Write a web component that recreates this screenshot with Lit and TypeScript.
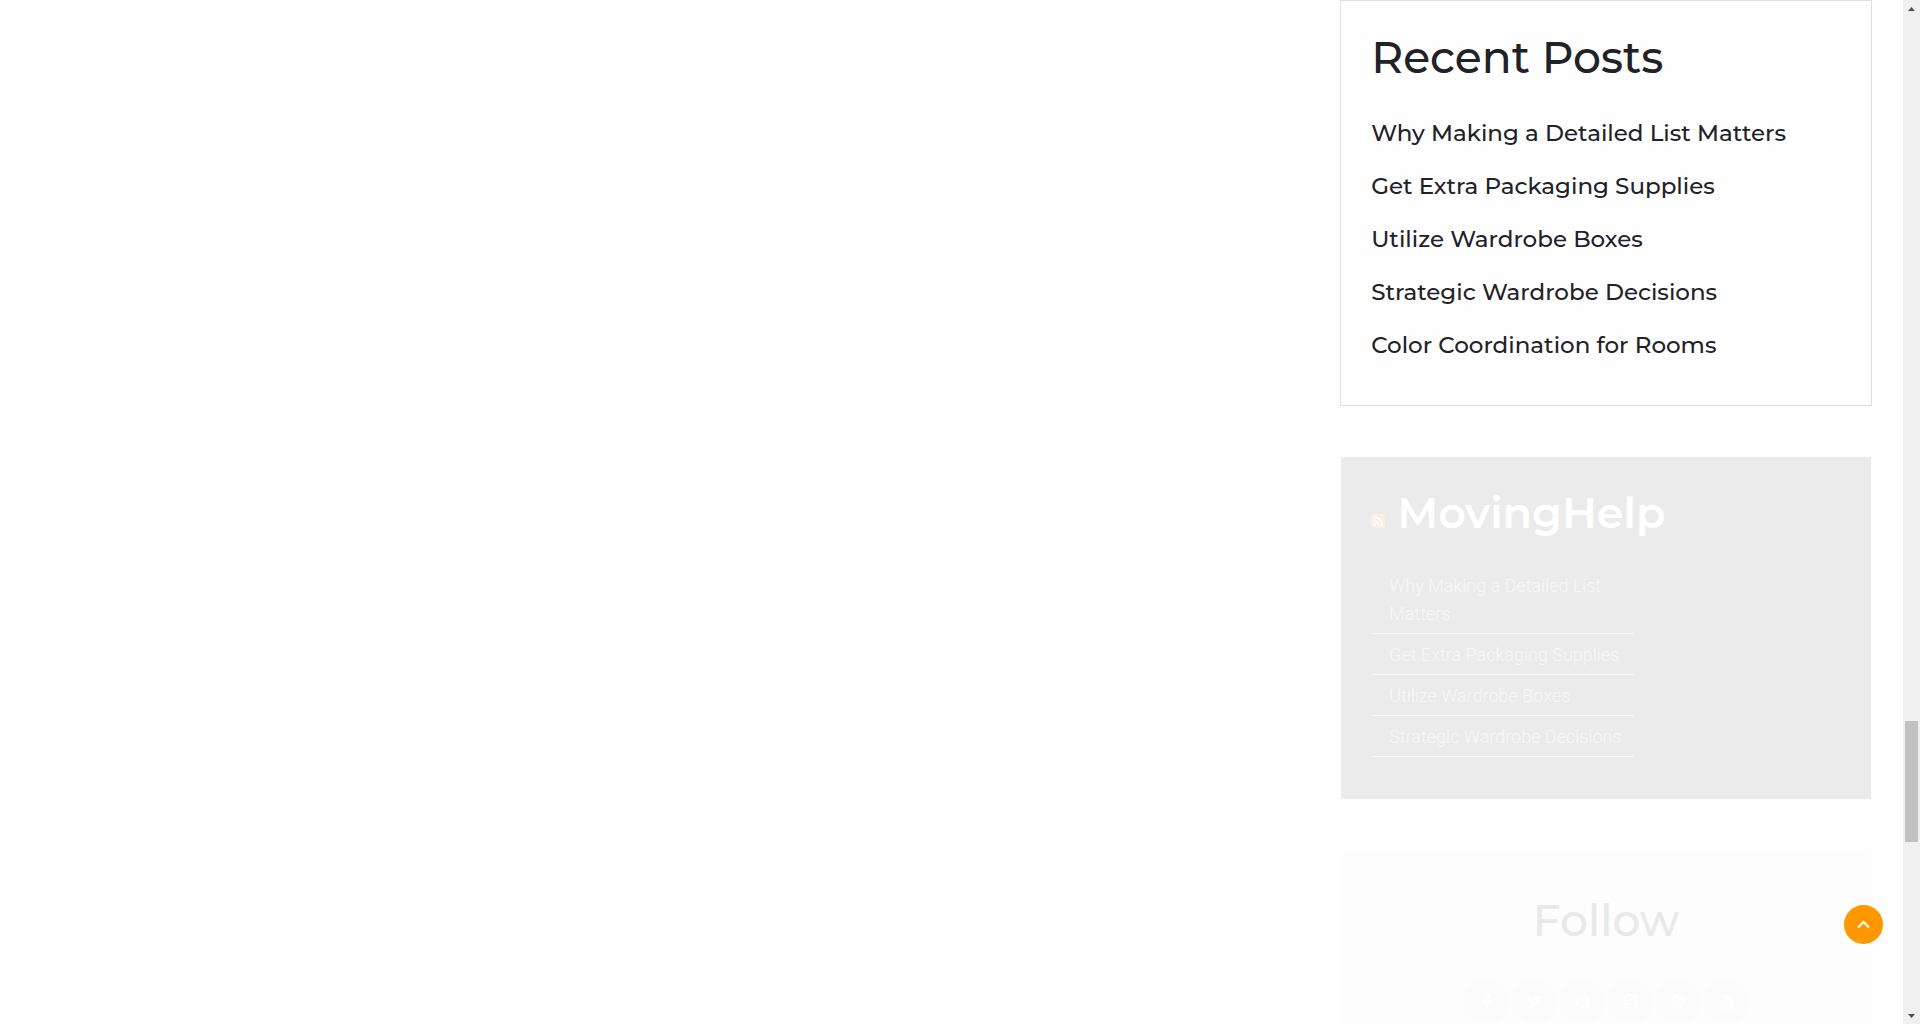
import { LitElement, html, svg, css } from "lit";
import { customElement } from "lit/decorators.js";

const posts = [
  "Why Making a Detailed List Matters",
  "Get Extra Packaging Supplies",
  "Utilize Wardrobe Boxes",
  "Strategic Wardrobe Decisions",
  "Color Coordination for Rooms",
];

const networks = [
  {
    name: "Facebook",
    icon: svg`<path d="M9.2 16V9h2.4l.4-2.9H9.2V4.4c0-.9.3-1.4 1.4-1.4H12V.2C11.700.1 10.900 0 10 0 7.800 0 6.300 1.300 6.300 3.800v2.300H4V9h2.300v7z"/>`,
  },
  {
    name: "Twitter",
    icon: svg`<path d="M16 3.100a6.500 6.500 0 0 1-1.900.5 3.300 3.300 0 0 0 1.400-1.800 6.500 6.500 0 0 1-2.100.8 3.300 3.300 0 0 0-5.600 3A9.300 9.300 0 0 1 1.100 2.200a3.300 3.300 0 0 0 1 4.400 3.300 3.300 0 0 1-1.500-.4 3.300 3.300 0 0 0 2.600 3.300 3.300 3.300 0 0 1-1.500 0 3.300 3.300 0 0 0 3.100 2.300A6.600 6.600 0 0 1 0 13.100 9.300 9.300 0 0 0 14.400 4.800 6.700 6.700 0 0 0 16 3.100z"/>`,
  },
  {
    name: "Pinterest",
    icon: svg`<path d="M8 1a7 7 0 0 0-2.700 13.500c0-.6 0-1.300.1-1.900l.9-3.800s-.2-.5-.2-1.100c0-1 .6-1.800 1.300-1.800.6 0 .9.500.9 1 0 .6-.4 1.500-.6 2.400-.2.700.4 1.300 1.100 1.300 1.300 0 2.200-1.700 2.200-3.700 0-1.500-1-2.700-2.900-2.700a3.300 3.300 0 0 0-3.400 3.300c0 .6.200 1 .5 1.300.1.200.1.300.1.400l-.2.600c0 .2-.2.300-.4.200-1-.4-1.400-1.500-1.400-2.700C3.300 5.200 5 3 8.300 3c2.600 0 4.400 1.900 4.400 4 0 2.700-1.500 4.800-3.700 4.800-.8 0-1.500-.4-1.700-.9l-.5 1.900c-.2.600-.5 1.200-.8 1.700A7 7 0 1 0 8 1z"/>`,
  },
  {
    name: "Instagram",
    icon: svg`<g fill="none" stroke="currentColor" stroke-width="1.700"><rect x="1.500" y="1.500" width="13" height="13" rx="3.500"/><circle cx="8" cy="8" r="3"/></g><circle cx="11.900" cy="4.100" r="1"/>`,
  },
  {
    name: "Dribbble",
    icon: svg`<g fill="none" stroke="currentColor" stroke-width="1.400"><circle cx="8" cy="8" r="6.700"/><path d="M5.500 1.800C8 5 9.700 8.600 10.600 14M1.300 7.200c4.500.1 8.500-.8 11.300-3.900M3.600 13C5.800 9 9.500 7.300 14.700 8.600"/></g>`,
  },
  {
    name: "YouTube",
    icon: svg`<path d="M3.700 0h1.200l.8 2.900L6.400 0h1.200L6.200 4.400v2.200H5V4.400zM8.700 1.600c1 0 1.400.6 1.400 1.500v2c0 .9-.5 1.500-1.400 1.500s-1.400-.6-1.400-1.500v-2c0-.9.500-1.500 1.400-1.500zM11 1.700h1v3.700c0 .4.500.2.900-.2V1.700h1v4.800h-1V6c-.8.900-1.900.8-1.900-.4z"/><path fill-rule="evenodd" d="M2.500 7.500h11c1 0 1.500.7 1.500 1.700v5c0 1-.5 1.800-1.500 1.800h-11C1.500 16 1 15.200 1 14.200v-5c0-1 .5-1.700 1.500-1.700zM3 9v1h1v4.500h1V10h1V9zm5 2v3.500h3V11z"/>`,
  },
];

@customElement("app-root")
export class AppRoot extends LitElement {
  static styles = css`
    :host {
      display: flex;
      height: 100vh;
      overflow: hidden;
      background: #fefefe;
      color: #212128;
      font-family: "Montserrat", "Inter", "Liberation Sans", sans-serif;
    }
    * {
      box-sizing: border-box;
    }
    ul {
      list-style: none;
      margin: 0;
      padding: 0;
    }
    a {
      color: inherit;
      text-decoration: none;
    }
    .page {
      flex: 1;
      display: grid;
      grid-template-columns: 63fr 25fr;
      padding-right: 31px;
      min-width: 0;
    }
    .sidebar {
      grid-column: 2;
      display: flex;
      flex-direction: column;
      gap: 50px;
    }
    .card {
      flex: none;
      border: 1px solid transparent;
      background-clip: padding-box;
      padding: 30px;
    }
    .title {
      margin: 0;
      font-size: 44px;
      line-height: 52px;
      font-weight: 500;
    }
    .recent {
      border-color: #dedee6;
      padding-bottom: 33px;
    }
    .recent-list {
      padding-top: 24px;
      font-size: 23px;
      line-height: 53px;
      font-weight: 500;
    }
    .feed {
      background-color: #ebebeb;
      color: #ffffff;
      padding-bottom: 42px;
    }
    .feed .title {
      font-weight: 600;
      font-size: 43px;
      display: flex;
      align-items: baseline;
      gap: 12px;
    }
    .rss {
      width: 14px;
      height: 14px;
    }
    .feed-list {
      width: 56%;
      padding-top: 26px;
      font-family: "Roboto", sans-serif;
      font-size: 18px;
      line-height: 28px;
      font-weight: 300;
      color: #f8f8f8;
    }
    .feed-item {
      padding: 7px 0 5px 18px;
      border-bottom: 1px solid #f7f7f7;
    }
    .follow {
      background-color: #fdfdfd;
      display: flex;
      flex-direction: column;
      align-items: center;
      gap: 33px;
      padding-top: 43px;
    }
    .follow .title {
      color: #e9e9e9;
    }
    .networks {
      display: flex;
      gap: 4px;
    }
    .network {
      display: grid;
      place-items: center;
      width: 44px;
      height: 44px;
      border-radius: 50%;
      background: #fbfbfb;
      color: #ffffff;
    }
    .network svg {
      width: 15px;
      height: 15px;
      fill: currentColor;
    }
    .to-top {
      position: fixed;
      right: 37px;
      bottom: 80px;
      width: 39px;
      height: 39px;
      border: 0;
      border-radius: 50%;
      padding: 0;
      background: #ff9800;
      color: #ffffff;
      display: grid;
      place-items: center;
    }
    .to-top svg {
      width: 13px;
      height: 9px;
    }
    .scrollbar {
      flex: none;
      width: 17px;
      background: #f0f0f0;
      display: grid;
      grid-template-rows: 17px 704fr 121fr 165fr 17px;
      justify-items: center;
      align-items: center;
    }
    .thumb {
      grid-row: 3;
      align-self: stretch;
      width: 13px;
      background: #c1c1c1;
    }
    .arrow {
      width: 7px;
      height: 4px;
      fill: #505050;
    }
    .arrow-down {
      grid-row: 5;
    }
  `;

  render() {
    return html`
      <main class="page">
        <aside class="sidebar">
          <section class="card recent">
            <h2 class="title">Recent Posts</h2>
            <ul class="recent-list">
              ${posts.map((post) => html`<li><a href="#">${post}</a></li>`)}
            </ul>
          </section>

          <section class="card feed">
            <h2 class="title">
              <a href="#" aria-label="RSS feed"
                ><svg class="rss" viewBox="0 0 14 14">
                  <rect width="14" height="14" rx="1" fill="#fceee5" />
                  <circle cx="3.600" cy="10.600" r="1.400" fill="#fff" />
                  <path
                    d="M2.300 6.300A5.300 5.300 0 0 1 7.700 11.900M2.300 2.800A9 9 0 0 1 11.200 11.900"
                    fill="none"
                    stroke="#fff"
                    stroke-width="1.600"
                  /></svg
              ></a>
              <a href="#">MovingHelp</a>
            </h2>
            <ul class="feed-list">
              ${posts
                .slice(0, 4)
                .map((post) => html`<li class="feed-item"><a href="#">${post}</a></li>`)}
            </ul>
          </section>

          <section class="card follow">
            <h2 class="title">Follow</h2>
            <ul class="networks">
              ${networks.map(
                (network) => html`<li>
                  <a class="network" href="#" aria-label=${network.name}
                    ><svg viewBox="0 0 16 16">${network.icon}</svg></a
                  >
                </li>`,
              )}
            </ul>
          </section>
        </aside>
      </main>

      <button class="to-top" type="button" aria-label="Back to top">
        <svg viewBox="0 0 13 9">
          <path d="M1 7.500 6.500 2 12 7.500" fill="none" stroke="currentColor" stroke-width="2" />
        </svg>
      </button>

      <div class="scrollbar" aria-hidden="true">
        <svg class="arrow" viewBox="0 0 7 4"><path d="M0 4 3.500 0 7 4z" /></svg>
        <div class="thumb"></div>
        <svg class="arrow arrow-down" viewBox="0 0 7 4"><path d="M0 0h7L3.500 4z" /></svg>
      </div>
    `;
  }
}
